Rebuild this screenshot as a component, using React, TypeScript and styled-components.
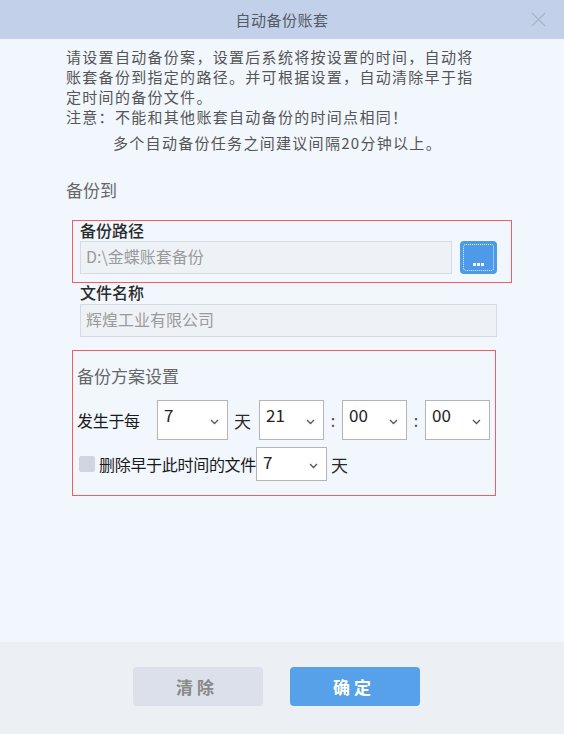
import React from 'react';
import styled, { createGlobalStyle } from 'styled-components';

const GlobalStyle = createGlobalStyle`
  html, body {
    margin: 0;
    padding: 0;
    background: #f1f7fd;
  }
  * {
    box-sizing: border-box;
  }
`;

const FONT = `"Noto Sans CJK SC", "Noto Sans", "Liberation Sans", sans-serif`;

const Window = styled.div`
  width: 564px;
  height: 734px;
  display: flex;
  flex-direction: column;
  background: #f1f7fd;
  font-family: ${FONT};
  overflow: hidden;
`;

const TitleBar = styled.div`
  height: 39px;
  flex-shrink: 0;
  display: grid;
  grid-template-columns: 1fr auto 1fr;
  align-items: center;
  background: #c3d0e9;
`;

const Title = styled.div`
  grid-column: 2;
  font-size: 15px;
  letter-spacing: 0.5px;
  color: #555b66;
`;

const CloseButton = styled.button`
  grid-column: 3;
  justify-self: end;
  margin-right: 16px;
  width: 20px;
  height: 20px;
  padding: 0;
  border: none;
  background: transparent;
  display: flex;
  align-items: center;
  justify-content: center;
`;

const Body = styled.div`
  flex: 1;
  padding: 8px 0 0 66px;
  display: flex;
  flex-direction: column;
`;

const Intro = styled.div`
  font-size: 15px;
  line-height: 20px;
  letter-spacing: 1.3px;
  color: #555;
  white-space: nowrap;
`;

const IntroLine = styled.div<{ $indent?: number; $gap?: number }>`
  height: 20px;
  padding-left: ${p => p.$indent || 0}px;
  margin-top: ${p => p.$gap || 0}px;
`;

const SectionTitle = styled.div<{ $top: number }>`
  margin-top: ${p => p.$top}px;
  font-size: 17px;
  line-height: 22px;
  color: #666;
`;

const Highlight = styled.div<{ $width: number; $top: number }>`
  width: ${p => p.$width}px;
  margin-top: ${p => p.$top}px;
  margin-left: 6px;
  border: 1.5px solid #ef5f62;
`;

const PathBox = styled(Highlight)`
  padding: 0 13px 8px 7px;
`;

const PlanBox = styled(Highlight)`
  padding: 14px 0 14px 4px;
  display: flex;
  flex-direction: column;
`;

const Label = styled.div`
  font-size: 16px;
  line-height: 18px;
  font-weight: 500;
  color: #2a2a2a;
`;

const InputRow = styled.div`
  display: flex;
  gap: 8px;
  margin-top: 2px;
`;

const TextInput = styled.div<{ $width: number }>`
  width: ${p => p.$width}px;
  height: 33px;
  padding: 3px 0 0 5px;
  background: #eef2f7;
  border: 1.5px solid #d6dbe3;
  font-size: 16px;
  line-height: 22px;
  color: #9a9a9a;
`;

const BrowseButton = styled.button`
  width: 37px;
  height: 33px;
  padding: 3px;
  border: none;
  border-radius: 4px;
  background: #4d9ae8;
  display: flex;
`;

const BrowseInner = styled.span`
  flex: 1;
  border: 1px dotted rgba(255, 255, 255, 0.85);
  border-radius: 3px;
  display: flex;
  align-items: flex-end;
  justify-content: center;
  padding-bottom: 4px;
  gap: 1px;
`;

const Dot = styled.span`
  width: 3px;
  height: 3px;
  background: #fff;
`;

const NameField = styled.div`
  margin-left: 14px;
  display: flex;
  flex-direction: column;
`;

const NameLabel = styled(Label)`
  margin-bottom: 3px;
`;

const Row = styled.div<{ $top: number }>`
  display: flex;
  align-items: center;
  margin-top: ${p => p.$top}px;
`;

const RowLabel = styled.div<{ $width?: number }>`
  width: ${p => (p.$width ? `${p.$width}px` : 'auto')};
  font-size: 16px;
  color: #1a1a1a;
  white-space: nowrap;
  letter-spacing: -0.3px;
`;

const Unit = styled.div<{ $left: number; $right: number }>`
  margin: 0 ${p => p.$right}px 0 ${p => p.$left}px;
  font-size: 17px;
  color: #2a2a2a;
`;

const Colon = styled.div`
  width: 18px;
  text-align: center;
  font-size: 16px;
  color: #444;
`;

const SelectBox = styled.div<{ $width: number; $height: number }>`
  width: ${p => p.$width}px;
  height: ${p => p.$height}px;
  background: #fff;
  border: 1.5px solid #b4b4b4;
  display: flex;
  align-items: flex-start;
  justify-content: space-between;
  padding: 3px 8px 0 6px;
  font-size: 17px;
  line-height: 22px;
  color: #222;
`;

const Chevron = styled.svg`
  align-self: center;
  flex-shrink: 0;
`;

const CheckBox = styled.span`
  width: 16px;
  height: 16px;
  margin: 0 4px 0 2px;
  background: #d0d5df;
  border-radius: 2px;
`;

const Footer = styled.div`
  height: 92px;
  flex-shrink: 0;
  background: #ecf0f5;
  display: flex;
  justify-content: center;
  align-items: flex-start;
  gap: 27px;
  padding: 25px 11px 0 0;
`;

const FooterButton = styled.button<{ $primary?: boolean }>`
  width: 130px;
  height: 39px;
  border: none;
  border-radius: 4px;
  background: ${p => (p.$primary ? '#56a1ea' : '#dbe0ea')};
  color: ${p => (p.$primary ? '#fff' : '#888')};
  font-family: ${FONT};
  font-size: 17px;
  font-weight: bold;
  letter-spacing: 4px;
  padding-left: 4px;
`;

const Select = ({ value, width, height }: { value: string; width: number; height: number }) => (
  <SelectBox $width={width} $height={height}>
    <span>{value}</span>
    <Chevron width="9" height="6" viewBox="0 0 9 6">
      <polyline points="1,1 4.5,4.5 8,1" fill="none" stroke="#555" strokeWidth="1.3" />
    </Chevron>
  </SelectBox>
);

export default function App() {
  return (
    <Window>
      <GlobalStyle />
      <TitleBar>
        <Title>自动备份账套</Title>
        <CloseButton aria-label="关闭">
          <svg width="15" height="15" viewBox="0 0 15 15">
            <path d="M1 1 L14 14 M14 1 L1 14" stroke="#a9b5c9" strokeWidth="1.4" fill="none" />
          </svg>
        </CloseButton>
      </TitleBar>

      <Body>
        <Intro>
          <IntroLine>请设置自动备份案，设置后系统将按设置的时间，自动将</IntroLine>
          <IntroLine>账套备份到指定的路径。并可根据设置，自动清除早于指</IntroLine>
          <IntroLine>定时间的备份文件。</IntroLine>
          <IntroLine>注意：不能和其他账套自动备份的时间点相同！</IntroLine>
          <IntroLine $indent={47} $gap={6}>多个自动备份任务之间建议间隔20分钟以上。</IntroLine>
        </Intro>

        <SectionTitle $top={26}>备份到</SectionTitle>

        <PathBox $width={440} $top={19}>
          <Label>备份路径</Label>
          <InputRow>
            <TextInput $width={372}>D:\金蝶账套备份</TextInput>
            <BrowseButton aria-label="浏览">
              <BrowseInner>
                <Dot />
                <Dot />
                <Dot />
              </BrowseInner>
            </BrowseButton>
          </InputRow>
        </PathBox>

        <NameField>
          <NameLabel>文件名称</NameLabel>
          <TextInput $width={417}>辉煌工业有限公司</TextInput>
        </NameField>

        <PlanBox $width={424} $top={13}>
          <SectionTitle $top={0}>备份方案设置</SectionTitle>
          <Row $top={13}>
            <RowLabel $width={80}>发生于每</RowLabel>
            <Select value="7" width={71} height={40} />
            <Unit $left={6} $right={8}>天</Unit>
            <Select value="21" width={65} height={40} />
            <Colon>:</Colon>
            <Select value="00" width={65} height={40} />
            <Colon>:</Colon>
            <Select value="00" width={65} height={40} />
          </Row>
          <Row $top={7}>
            <CheckBox />
            <RowLabel>删除早于此时间的文件</RowLabel>
            <Select value="7" width={71} height={34} />
            <Unit $left={4} $right={0}>天</Unit>
          </Row>
        </PlanBox>
      </Body>

      <Footer>
        <FooterButton>清除</FooterButton>
        <FooterButton $primary>确定</FooterButton>
      </Footer>
    </Window>
  );
}
